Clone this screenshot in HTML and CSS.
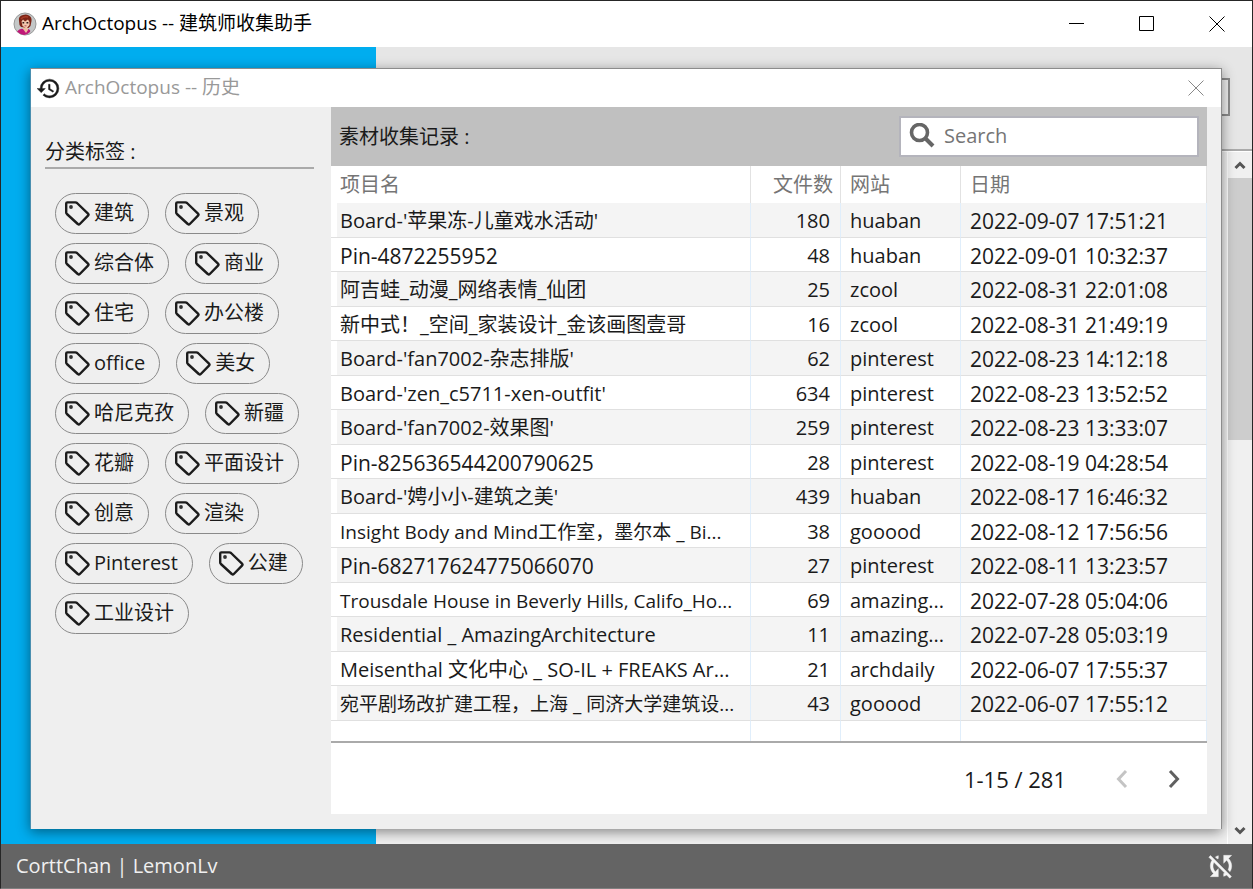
FILE: index.html
```html
<!DOCTYPE html>
<html lang="zh-CN">
<head>
<meta charset="utf-8">
<title>ArchOctopus</title>
<link rel="stylesheet" href="styles.css">
</head>
<body>
<svg class="sprite" aria-hidden="true">
  <symbol id="tag" viewBox="0 0 26 26">
    <path d="M3.4 2.4H11.4Q12.3 2.4 13 3L24 13.6Q25 14.6 24 15.6L15.8 24Q14.8 25 13.8 24L2.9 14Q2.2 13.3 2.2 12.4V3.6Q2.2 2.4 3.4 2.4Z" fill="none" stroke="#1c1c1c" stroke-width="2.4" stroke-linejoin="round"/>
    <circle cx="7" cy="7" r="1.9" fill="#333"/>
  </symbol>
  <symbol id="close" viewBox="0 0 16 16"><path d="M.5 .5 15.5 15.5M15.5 .5 .5 15.5" fill="none" stroke="currentColor" stroke-width="1"/></symbol>
</svg>
<div class="app">
  <header class="titlebar">
    <svg class="avatar" viewBox="0 0 24 24" aria-hidden="true">
      <circle cx="12" cy="12" r="11" fill="#c4c8c8" stroke="#999" stroke-width="1"/>
      <path d="M4 19.500Q7 16 10 17L15 17Q18 18 17 20Q14 23 11 23Q7 22.500 4 19.500Z" fill="#c01878"/>
      <path d="M10 14h5v4l-2 3-3-4Z" fill="#eebda0"/>
      <path d="M6 9Q5 4 10 3Q13 1.600 16 3.500Q19 5 18.500 9L17.500 14 15.500 16 8 15 6.500 13Z" fill="#7c2416"/>
      <path d="M8.500 9.500 10 7.500l2 2 3-2 1.500 2.500v3l-3 3.500L9.500 14Z" fill="#f3c8ad"/>
      <path d="M8 7Q10 4 15 5" fill="none" stroke="#a83c28" stroke-width="1.500"/>
      <path d="M9.500 10.800h1.700M13.500 10.800h1.800" stroke="#301818" stroke-width="1.400"/>
      <path d="M11.500 13.800h2" stroke="#a34" stroke-width=".8"/>
    </svg>
    <h1 class="caption">ArchOctopus -- 建筑师收集助手</h1>
    <div class="window-buttons">
      <button type="button" aria-label="Minimize"><svg viewBox="0 0 16 16"><path d="M0 7.500H15" stroke="#000"/></svg></button>
      <button type="button" aria-label="Maximize"><svg viewBox="0 0 16 16"><path d="M.5 .5H14.500V14.500H.5Z" fill="none" stroke="#000"/></svg></button>
      <button type="button" aria-label="Close"><svg viewBox="0 0 16 16"><use href="#close"/></svg></button>
    </div>
  </header>

  <main class="workspace">
    <div class="backdrop">
      <div class="blue-pane"></div>
      <div class="grey-pane">
        <div class="toolbar"><input class="toolbar-input" type="text" aria-label="Address"></div>
        <div class="scroll-area">
          <div class="scrollbar">
            <button type="button" aria-label="Scroll up"><svg viewBox="0 0 12 10"><path d="M1.500 8 6 3.500 10.500 8" fill="none" stroke="#555" stroke-width="3"/></svg></button>
            <div class="track"><div class="thumb"></div></div>
            <button type="button" aria-label="Scroll down"><svg viewBox="0 0 12 10"><path d="M1.500 2 6 6.500 10.500 2" fill="none" stroke="#555" stroke-width="3"/></svg></button>
          </div>
        </div>
      </div>
    </div>

    <section class="dialog" role="dialog" aria-labelledby="dialog-title">
      <header class="dialog-bar">
        <svg class="history" viewBox="0 0 24 24" aria-hidden="true"><path d="M13 3a9 9 0 0 0-9 9H1l3.890 3.890.070.140L9 12H6c0-3.870 3.130-7 7-7s7 3.130 7 7-3.130 7-7 7c-1.930 0-3.680-.790-4.940-2.060l-1.420 1.420A8.950 8.950 0 0 0 13 21a9 9 0 0 0 0-18zm-1 5v5l4.280 2.540.720-1.210-3.500-2.080V8H12z" fill="#1a1a1a" stroke="#1a1a1a" stroke-width=".4"/></svg>
        <h2 class="caption muted" id="dialog-title">ArchOctopus -- 历史</h2>
        <button class="dialog-close" type="button" aria-label="Close"><svg viewBox="0 0 16 16"><use href="#close"/></svg></button>
      </header>
      <div class="dialog-body">
        <aside class="sidebar">
          <h3 class="side-title">分类标签 :</h3>
          <div class="tags">
            <button class="tag" type="button"><svg><use href="#tag"/></svg>建筑</button>
            <button class="tag" type="button"><svg><use href="#tag"/></svg>景观</button>
            <button class="tag" type="button"><svg><use href="#tag"/></svg>综合体</button>
            <button class="tag" type="button"><svg><use href="#tag"/></svg>商业</button>
            <button class="tag" type="button"><svg><use href="#tag"/></svg>住宅</button>
            <button class="tag" type="button"><svg><use href="#tag"/></svg>办公楼</button>
            <button class="tag" type="button"><svg><use href="#tag"/></svg>office</button>
            <button class="tag" type="button"><svg><use href="#tag"/></svg>美女</button>
            <button class="tag" type="button"><svg><use href="#tag"/></svg>哈尼克孜</button>
            <button class="tag" type="button"><svg><use href="#tag"/></svg>新疆</button>
            <button class="tag" type="button"><svg><use href="#tag"/></svg>花瓣</button>
            <button class="tag" type="button"><svg><use href="#tag"/></svg>平面设计</button>
            <button class="tag" type="button"><svg><use href="#tag"/></svg>创意</button>
            <button class="tag" type="button"><svg><use href="#tag"/></svg>渲染</button>
            <button class="tag" type="button"><svg><use href="#tag"/></svg>Pinterest</button>
            <button class="tag" type="button"><svg><use href="#tag"/></svg>公建</button>
            <button class="tag" type="button"><svg><use href="#tag"/></svg>工业设计</button>
          </div>
        </aside>
        <div class="records">
          <div class="records-head">
            <h3 class="records-title">素材收集记录 :</h3>
            <label class="search">
              <svg viewBox="0 0 26 26" aria-hidden="true"><circle cx="10.500" cy="9.500" r="8" fill="none" stroke="#666" stroke-width="3.600"/><path d="M16 15 24 23" stroke="#666" stroke-width="4"/></svg>
              <input type="search" placeholder="Search" aria-label="Search">
            </label>
          </div>
          <table class="grid">
            <colgroup><col class="c-name"><col class="c-count"><col class="c-site"><col class="c-date"></colgroup>
            <thead><tr><th>项目名</th><th class="num">文件数</th><th>网站</th><th>日期</th></tr></thead>
            <tbody>
              <tr><td>Board-'苹果冻-儿童戏水活动'</td><td>180</td><td>huaban</td><td>2022-09-07 17:51:21</td></tr>
              <tr><td class="code">Pin-4872255952</td><td>48</td><td>huaban</td><td>2022-09-01 10:32:37</td></tr>
              <tr><td>阿吉蛙_动漫_网络表情_仙团</td><td>25</td><td>zcool</td><td>2022-08-31 22:01:08</td></tr>
              <tr><td>新中式！_空间_家装设计_金该画图壹哥</td><td>16</td><td>zcool</td><td>2022-08-31 21:49:19</td></tr>
              <tr><td>Board-'fan7002-杂志排版'</td><td>62</td><td>pinterest</td><td>2022-08-23 14:12:18</td></tr>
              <tr><td>Board-'zen_c5711-xen-outfit'</td><td>634</td><td>pinterest</td><td>2022-08-23 13:52:52</td></tr>
              <tr><td>Board-'fan7002-效果图'</td><td>259</td><td>pinterest</td><td>2022-08-23 13:33:07</td></tr>
              <tr><td class="code">Pin-825636544200790625</td><td>28</td><td>pinterest</td><td>2022-08-19 04:28:54</td></tr>
              <tr><td>Board-'娉小小-建筑之美'</td><td>439</td><td>huaban</td><td>2022-08-17 16:46:32</td></tr>
              <tr><td class="long">Insight Body and Mind工作室，墨尔本 _ Bi...</td><td>38</td><td>gooood</td><td>2022-08-12 17:56:56</td></tr>
              <tr><td class="code">Pin-682717624775066070</td><td>27</td><td>pinterest</td><td>2022-08-11 13:23:57</td></tr>
              <tr><td class="long">Trousdale House in Beverly Hills, Califo_Ho...</td><td>69</td><td>amazing...</td><td>2022-07-28 05:04:06</td></tr>
              <tr><td>Residential _ AmazingArchitecture</td><td>11</td><td>amazing...</td><td>2022-07-28 05:03:19</td></tr>
              <tr><td>Meisenthal 文化中心 _ SO-IL + FREAKS Ar...</td><td>21</td><td>archdaily</td><td>2022-06-07 17:55:37</td></tr>
              <tr><td class="long">宛平剧场改扩建工程，上海 _ 同济大学建筑设...</td><td>43</td><td>gooood</td><td>2022-06-07 17:55:12</td></tr>
              <tr class="spare"><td></td><td></td><td></td><td></td></tr>
            </tbody>
          </table>
          <nav class="pager" aria-label="Pages">
            <span>1-15 / 281</span>
            <button type="button" aria-label="Previous" disabled><svg viewBox="0 0 12 20"><path d="M10 2 2.500 10 10 18" fill="none" stroke="#c4c4c4" stroke-width="3"/></svg></button>
            <button type="button" aria-label="Next"><svg viewBox="0 0 12 20"><path d="M2 2 9.500 10 2 18" fill="none" stroke="#606060" stroke-width="3"/></svg></button>
          </nav>
        </div>
      </div>
    </section>
  </main>

  <footer class="statusbar">
    <span>CorttChan | LemonLv</span>
    <button type="button" aria-label="Sync disabled"><svg viewBox="0 0 24 24"><path d="M10 6.350V4.260c-.8.210-1.550.540-2.230.960l1.460 1.460c.250-.120.500-.240.770-.330zm-7.140-.940l2.360 2.360C4.450 8.990 4 10.440 4 12c0 2.210.910 4.200 2.360 5.640L4 20h6v-6l-2.240 2.240C6.680 15.150 6 13.660 6 12c0-1 .250-1.940.680-2.770l8.080 8.080c-.250.130-.500.250-.770.340v2.090c.800-.210 1.550-.540 2.230-.960l2.360 2.360 1.270-1.270L4.140 4.140 2.860 5.410zM20 4h-6v6l2.240-2.240C17.320 8.850 18 10.340 18 12c0 1-.250 1.940-.680 2.770l1.460 1.460C19.550 15.010 20 13.560 20 12c0-2.210-.910-4.200-2.360-5.640L20 4z" fill="#f4f4f4" stroke="#f4f4f4" stroke-width=".3"/></svg></button>
  </footer>
</div>
</body>
</html>
```

FILE: styles.css
```css
* { box-sizing: border-box; }
body {
  margin: 0;
  font-family: "Open Sans", "Noto Sans CJK SC", sans-serif;
  font-size: 20px;
  line-height: 28px;
  color: #1a1a1a;
}
h1, h2, h3 { margin: 0; font-weight: 400; }
button { padding: 0; border: 0; background: none; color: inherit; font: inherit; }
svg { display: block; }
.sprite { position: absolute; width: 0; height: 0; }

.app {
  display: flex;
  flex-direction: column;
  min-height: 100vh;
  border: 1px solid #262626;
  border-bottom-color: #808080;
}

.titlebar {
  display: flex;
  align-items: center;
  height: 46px;
  padding-left: 12px;
  background: #fff;
}
.avatar { width: 24px; height: 24px; margin-right: 5px; }
.caption { padding-bottom: 2px; font-size: 19px; color: #000; }
.muted { color: #999; }
.window-buttons { display: flex; margin-left: auto; }
.window-buttons button { display: grid; place-items: center; width: 70px; height: 44px; color: #000; }
.window-buttons svg { width: 16px; height: 16px; }

.workspace { flex: 1; display: grid; }
.workspace > * { grid-area: 1 / 1; }
.backdrop { display: grid; grid-template-columns: 3fr 7fr; }
.blue-pane { background: #00adef; }
.grey-pane { display: flex; flex-direction: column; background: #e6e6e6; }
.toolbar {
  display: flex;
  align-items: center;
  justify-content: flex-end;
  height: 104px;
  padding: 0 22px 3px;
  border-bottom: 2px solid #aaa;
}
.toolbar-input { width: 100%; height: 38px; border: 2px solid #8c8c8c; background: #efefef; }
.scroll-area { flex: 1; display: flex; justify-content: flex-end; background: #f0f0f0; border-top: 1px solid #fff; }
.scrollbar { display: flex; flex-direction: column; width: 25px; border-left: 1px solid #fff; }
.scrollbar button { display: grid; place-items: center; height: 26px; }
.scrollbar svg { width: 12px; height: 10px; }
.track { flex: 1; }
.thumb { height: 41%; background: #cdcdcd; }

.dialog {
  display: flex;
  flex-direction: column;
  margin: 21px 30px 15px 29px;
  border: 1px solid #8c8c8c;
  border-width: 1px 1px 0;
  border-left-color: #4a8fb0;
  background: #efefef;
  box-shadow: 0 3px 12px rgba(0, 0, 0, .45);
  z-index: 1;
}
.dialog-bar { display: flex; align-items: center; height: 38px; padding: 0 17px 0 5px; background: #fff; }
.history { width: 25px; height: 25px; margin-right: 4px; }
.dialog-close { margin-left: auto; color: #888; }
.dialog-close svg { width: 16px; height: 16px; }
.dialog-body { flex: 1; display: grid; grid-template-columns: 300px 1fr; padding: 0 14px 15px 0; }

.sidebar { padding: 31px 17px 0 14px; }
.side-title { height: 31px; border-bottom: 2px solid #aaa; font-size: 20px; }
.tags { display: flex; flex-wrap: wrap; gap: 9px 16px; margin-top: 24px; padding-left: 10px; }
.tag {
  display: flex;
  align-items: center;
  height: 41px;
  padding: 0 14px 2px 8px;
  border: 1px solid #8a8a8a;
  border-radius: 21px;
  gap: 4px;
  font-size: 20px;
}
.tag svg { width: 26px; height: 26px; }

.records { display: flex; flex-direction: column; background: #fff; min-width: 0; }
.records-head {
  display: flex;
  align-items: center;
  justify-content: space-between;
  height: 59px;
  padding: 0 8px;
  background: #c0c0c0;
}
.records-title { font-size: 20px; }
.search {
  display: flex;
  align-items: center;
  width: 300px;
  height: 41px;
  padding: 0 0 2px 8px;
  border: 2px solid #b4b4bc;
  background: #fff;
}
.search svg { width: 26px; height: 26px; margin-right: 9px; }
.search input { flex: 1; min-width: 0; padding: 0; border: 0; outline: 0; background: none; font: inherit; }
.search input::placeholder { color: #757575; opacity: 1; }

.grid { width: 100%; table-layout: fixed; border-collapse: separate; border-spacing: 0; border-bottom: 2px solid #aaa; }
.c-count { width: 90px; }
.c-site { width: 120px; }
.c-date { width: 246px; }
.grid th, .grid td { overflow: hidden; white-space: nowrap; text-align: left; padding: 2px 0 0 9px; }
.grid th { height: 37px; padding-top: 0; border-right: 1px solid #e2e2e2; font-weight: 400; color: #757575; }
.grid td { height: 34px; border-right: 1px solid #e0eefb; border-bottom: 1px solid #e0e0e0; }
.grid tr:nth-child(odd) td { height: 35px; background: #f4f4f4; }
.grid tr:nth-child(odd) td:first-child { background: linear-gradient(90deg, #fff 6px, #f4f4f4 6px); }
.grid th.num { padding-right: 7px; text-align: right; }
.grid td:nth-child(2) { padding-right: 10px; text-align: right; }
.grid td:last-child, .grid .code { font-size: 21px; }
.grid .long { font-size: 19px; }
.grid .spare td { height: 20px; border-bottom: 0; }

.pager { flex: 1; display: flex; align-items: center; justify-content: flex-end; padding-right: 27px; }
.pager span { margin-right: 50px; font-size: 22px; }
.pager button + button { margin-left: 40px; }
.pager svg { width: 12px; height: 20px; }

.statusbar {
  display: flex;
  align-items: center;
  justify-content: space-between;
  height: 44px;
  padding: 0 15px;
  background: #646464;
  color: #f0f0f0;
}
.statusbar svg { width: 32px; height: 32px; }
```
